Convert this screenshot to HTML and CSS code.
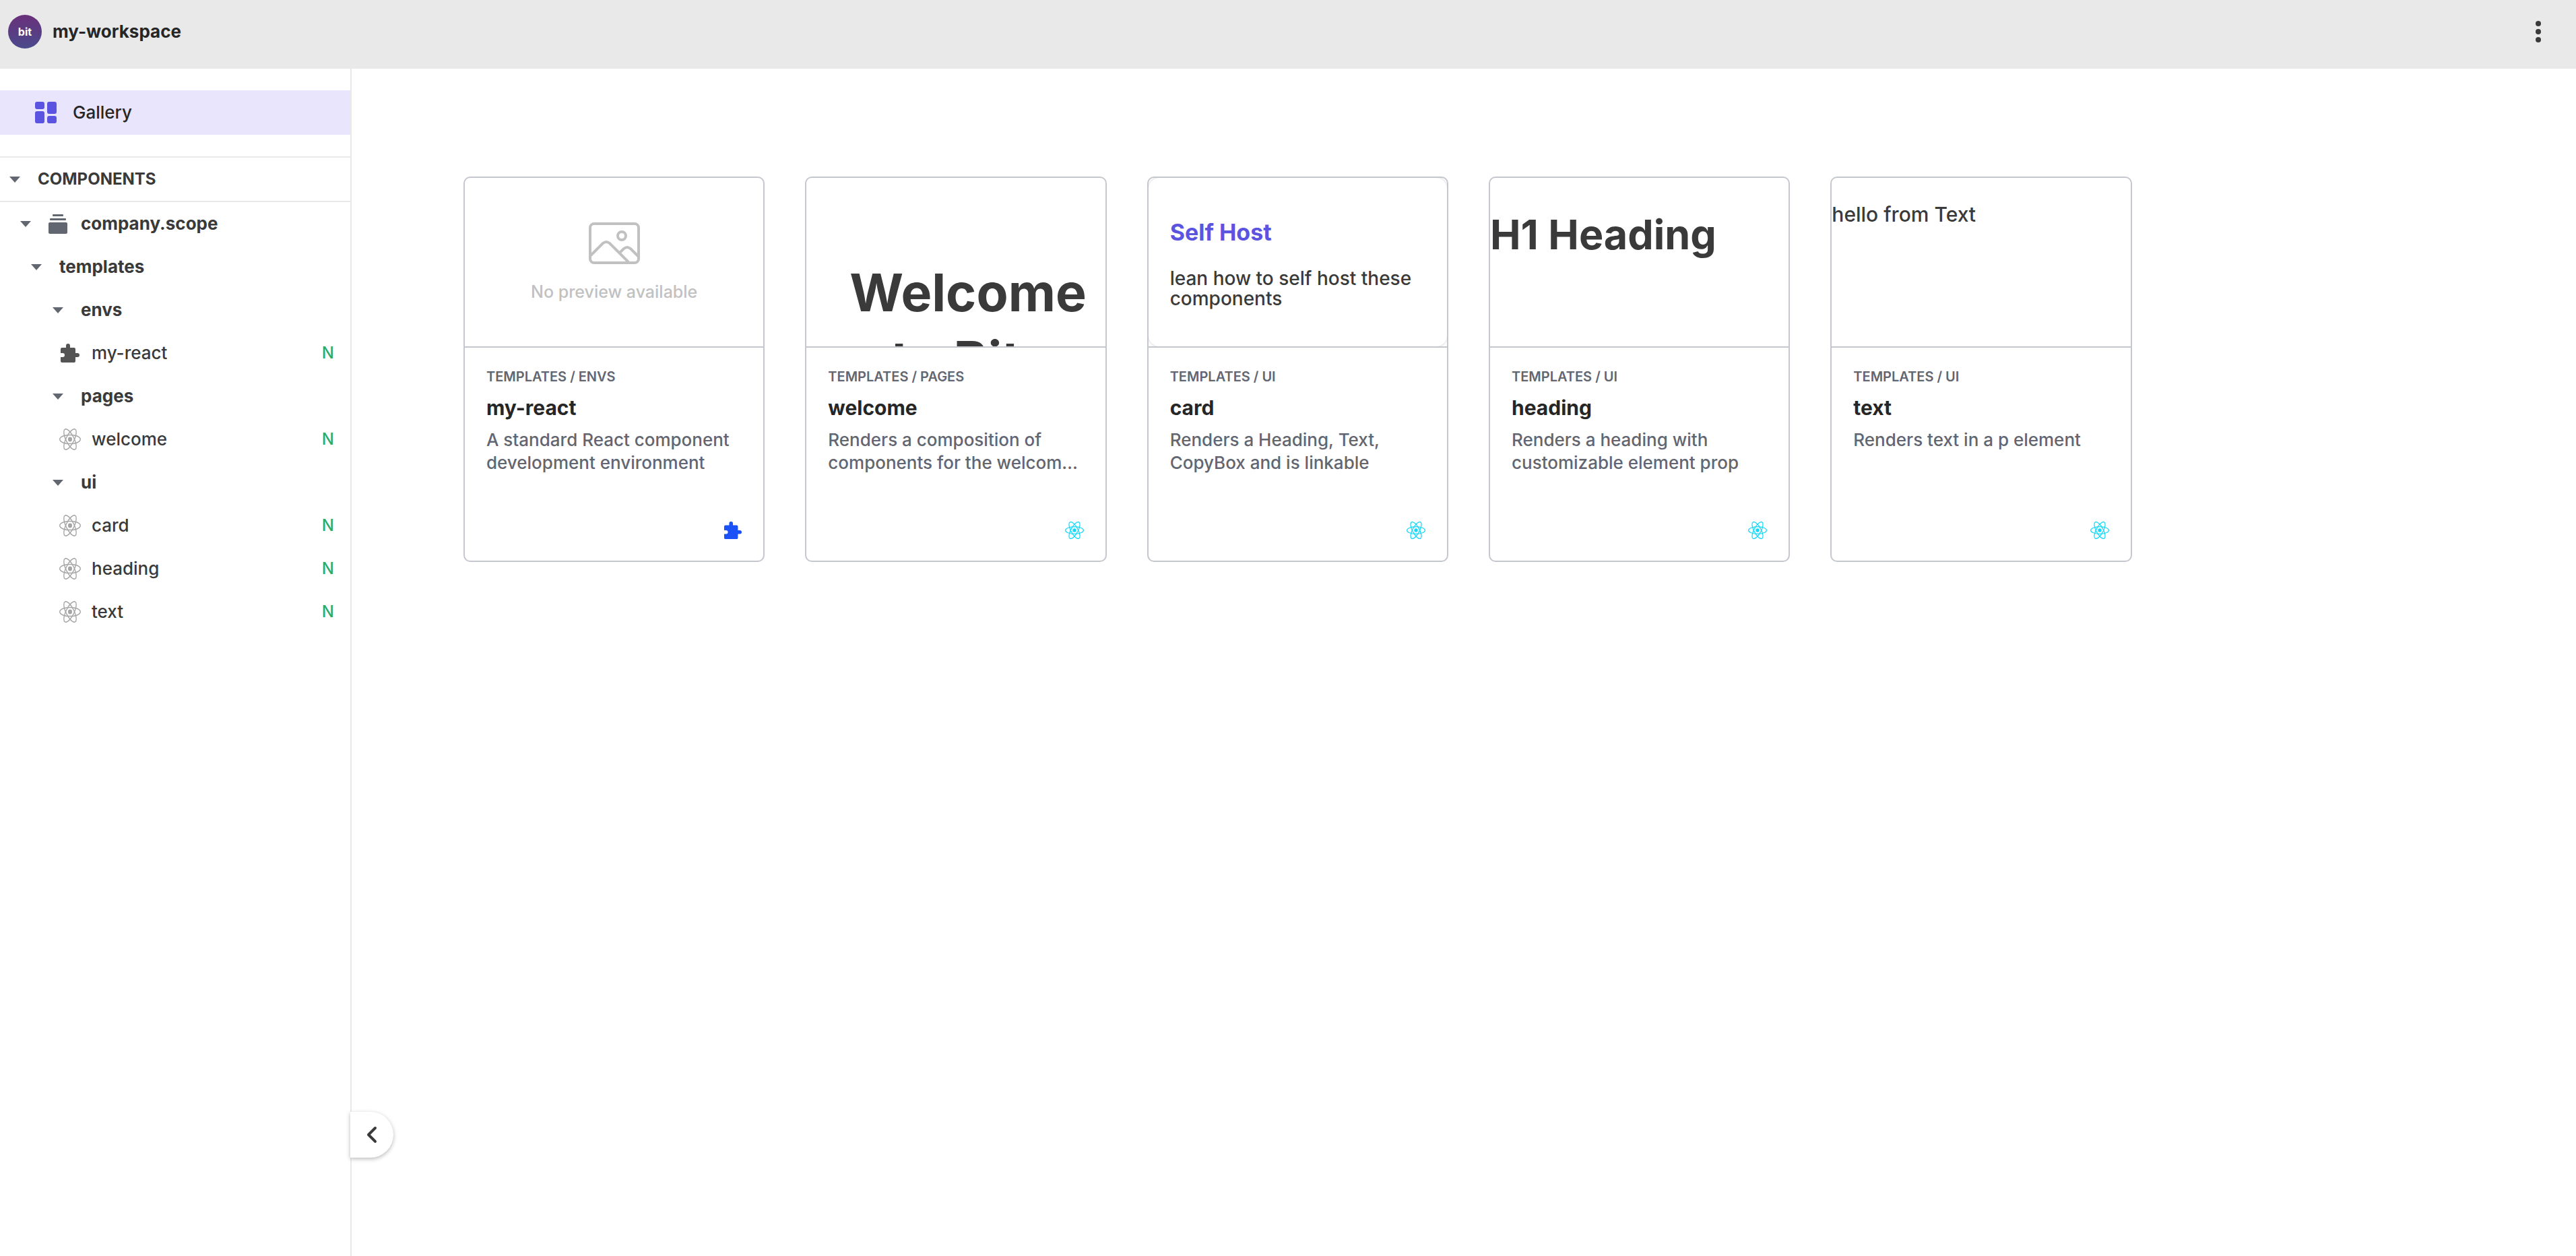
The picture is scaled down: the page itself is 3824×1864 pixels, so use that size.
FILE: index.html
```html
<!DOCTYPE html>
<html lang="en">
<head>
<meta charset="utf-8">
<title>my-workspace</title>
<link rel="stylesheet" href="styles.css">
</head>
<body>
<svg class="sprite" aria-hidden="true">
  <symbol id="react" viewBox="-11.5 -10.23 23 20.46" preserveAspectRatio="none">
    <circle r="2.2" fill="currentColor"/>
    <g fill="none" stroke="currentColor" stroke-width="1">
      <ellipse rx="11" ry="4.2"/>
      <ellipse rx="11" ry="4.2" transform="rotate(60)"/>
      <ellipse rx="11" ry="4.2" transform="rotate(120)"/>
    </g>
  </symbol>
  <symbol id="puzzle" viewBox="0 0 28 28">
    <path fill="currentColor" d="M2 6h6V3a3 3 0 0 1 6 0v3h6a2 2 0 0 1 2 2v6h3a3 3 0 0 1 0 6h-3v6a2 2 0 0 1-2 2H2a2 2 0 0 1-2-2v-6h3a3 3 0 0 0 0-6H0V8a2 2 0 0 1 2-2z"/>
  </symbol>
</svg>

<header class="topbar">
  <a class="brand" href="#">
    <span class="logo">bit</span>
    <span class="brand-name">my-workspace</span>
  </a>
  <button class="kebab" type="button" aria-label="Menu">
    <svg width="8" height="32" viewBox="0 0 8 32" fill="currentColor"><circle cx="4" cy="4" r="4"/><circle cx="4" cy="16" r="4"/><circle cx="4" cy="28" r="4"/></svg>
  </button>
</header>

<div class="layout">
  <nav class="sidebar" aria-label="Workspace">
    <a class="gallery-link" href="#">
      <svg width="32" height="32" viewBox="0 0 32 32" fill="currentColor"><rect width="14" height="11" rx="3"/><rect y="14" width="14" height="18" rx="3"/><rect x="18" width="14" height="18" rx="3"/><rect x="18" y="21" width="14" height="11" rx="3"/></svg>
      Gallery
    </a>
    <button class="section" type="button"><span class="caret"></span>COMPONENTS</button>
    <ul class="tree">
      <li><button class="row depth-1" type="button"><span class="caret"></span>
        <svg class="scope-icon" width="28" height="29" viewBox="0 0 28 29" fill="currentColor"><rect x="6" width="16" height="3" rx="1"/><rect x="2" y="6" width="24" height="3" rx="1"/><rect y="12" width="28" height="17" rx="2"/></svg>company.scope</button></li>
      <li><button class="row depth-2" type="button"><span class="caret"></span>templates</button></li>
      <li><button class="row depth-3" type="button"><span class="caret"></span>envs</button></li>
      <li><a class="row leaf" href="#"><svg class="leaf-icon env"><use href="#puzzle"/></svg>my-react<span class="status">N</span></a></li>
      <li><button class="row depth-3" type="button"><span class="caret"></span>pages</button></li>
      <li><a class="row leaf" href="#"><svg class="leaf-icon"><use href="#react"/></svg>welcome<span class="status">N</span></a></li>
      <li><button class="row depth-3" type="button"><span class="caret"></span>ui</button></li>
      <li><a class="row leaf" href="#"><svg class="leaf-icon"><use href="#react"/></svg>card<span class="status">N</span></a></li>
      <li><a class="row leaf" href="#"><svg class="leaf-icon"><use href="#react"/></svg>heading<span class="status">N</span></a></li>
      <li><a class="row leaf" href="#"><svg class="leaf-icon"><use href="#react"/></svg>text<span class="status">N</span></a></li>
    </ul>
  </nav>

  <main class="content">
    <button class="collapse" type="button" aria-label="Collapse sidebar">
      <svg width="16" height="26" viewBox="0 0 16 26" fill="none" stroke="currentColor" stroke-width="4" stroke-linecap="round" stroke-linejoin="round"><path d="M13 3 3 13l10 10"/></svg>
    </button>
    <div class="cards">
      <a class="card" href="#">
        <div class="preview preview-empty">
          <svg width="76" height="62" viewBox="0 0 76 62" fill="none" stroke="currentColor" stroke-width="4"><rect x="2" y="2" width="72" height="58" rx="6"/><circle cx="49" cy="20" r="6"/><path d="M3 49 21 31q5-4 10 0l28 28M45 46l7-7q5-4 10 0l12 12"/></svg>
          <span>No preview available</span>
        </div>
        <div class="info">
          <span class="path">TEMPLATES / ENVS</span>
          <h2 class="name">my-react</h2>
          <p class="desc">A standard React component development environment</p>
          <svg class="env-icon env"><use href="#puzzle"/></svg>
        </div>
      </a>
      <a class="card" href="#">
        <div class="preview preview-welcome"><h1>Welcome to Bit</h1></div>
        <div class="info">
          <span class="path">TEMPLATES / PAGES</span>
          <h2 class="name">welcome</h2>
          <p class="desc">Renders a composition of components for the welcome page</p>
          <svg class="env-icon"><use href="#react"/></svg>
        </div>
      </a>
      <a class="card" href="#">
        <div class="preview"><div class="demo-card"><h3>Self Host</h3><p>lean how to self host these components</p></div></div>
        <div class="info">
          <span class="path">TEMPLATES / UI</span>
          <h2 class="name">card</h2>
          <p class="desc">Renders a Heading, Text, CopyBox and is linkable</p>
          <svg class="env-icon"><use href="#react"/></svg>
        </div>
      </a>
      <a class="card" href="#">
        <div class="preview preview-heading"><h1>H1 Heading</h1></div>
        <div class="info">
          <span class="path">TEMPLATES / UI</span>
          <h2 class="name">heading</h2>
          <p class="desc">Renders a heading with customizable element prop</p>
          <svg class="env-icon"><use href="#react"/></svg>
        </div>
      </a>
      <a class="card" href="#">
        <div class="preview preview-text"><p>hello from Text</p></div>
        <div class="info">
          <span class="path">TEMPLATES / UI</span>
          <h2 class="name">text</h2>
          <p class="desc">Renders text in a p element</p>
          <svg class="env-icon"><use href="#react"/></svg>
        </div>
      </a>
    </div>
  </main>
</div>
</body>
</html>
```
FILE: styles.css
```css
:root {
  --ink: #3a3a3a;
  --title: #262626;
  --muted: #626671;
  --line: #e9e9e9;
  --card-line: #c4c7cd;
  --brand: #5b54e0;
}

* { box-sizing: border-box; }

body {
  margin: 0;
  min-height: 100vh;
  display: flex;
  flex-direction: column;
  background: #fff;
  color: var(--ink);
  font: 500 26px/34px Inter, sans-serif;
}

h1, h2, h3, p, ul { margin: 0; padding: 0; }
a { color: inherit; text-decoration: none; }
button { border: 0; background: none; padding: 0; font: inherit; color: inherit; text-align: left; }
.sprite { display: none; }

/* Top bar */
.topbar {
  height: 102px;
  padding: 0 52px 8px 12px;
  display: flex;
  align-items: center;
  justify-content: space-between;
  background: var(--line);
}
.brand { display: flex; align-items: center; gap: 16px; }
.logo {
  width: 50px;
  height: 50px;
  border-radius: 50%;
  display: flex;
  align-items: center;
  justify-content: center;
  background: linear-gradient(#69307a, #4a4a8c);
  color: #fff;
  font-size: 16px;
  font-weight: 700;
}
.brand-name { color: var(--title); font-weight: 700; }
.kebab { display: flex; }

/* Sidebar */
.layout { flex: 1; display: flex; }
.sidebar {
  flex: 0 0 522px;
  padding-top: 32px;
  border-right: 2px solid var(--line);
}
.gallery-link {
  height: 66px;
  margin-bottom: 32px;
  padding-left: 52px;
  display: flex;
  align-items: center;
  gap: 24px;
  background: #e8e5fc;
  color: var(--title);
}
.gallery-link svg { color: var(--brand); }
.section {
  width: 100%;
  height: 68px;
  padding-left: 14px;
  display: flex;
  align-items: center;
  gap: 26px;
  border: solid var(--line);
  border-width: 2px 0;
  font-size: 24px;
  font-weight: 700;
}
.caret {
  border: solid transparent;
  border-width: 9px 8px 0;
  border-top-color: var(--muted);
}
.tree { list-style: none; }
.row {
  width: 100%;
  height: 64px;
  padding-right: 24px;
  display: flex;
  align-items: center;
  gap: 26px;
  font-weight: 700;
}
.depth-1 { padding-left: 30px; }
.depth-2 { padding-left: 46px; }
.depth-3 { padding-left: 78px; }
.scope-icon { margin-right: -6px; color: var(--muted); }
.leaf { padding-left: 88px; gap: 16px; font-weight: 500; }
.leaf-icon { width: 32px; height: 32px; color: #a6a6a6; }
.leaf-icon.env { padding: 2px; color: #545454; }
.status { margin-left: auto; color: #2dac68; font-size: 24px; }

/* Gallery */
.content { flex: 1; position: relative; padding: 160px 152px 160px 166px; }
.cards {
  display: grid;
  grid-template-columns: repeat(auto-fill, minmax(400px, 1fr));
  gap: 60px;
}
.card {
  min-height: 572px;
  display: flex;
  flex-direction: column;
  overflow: hidden;
  border: 2px solid var(--card-line);
  border-radius: 10px;
}
.preview {
  height: 252px;
  overflow: hidden;
  border-bottom: 2px solid var(--card-line);
}
.preview-empty {
  padding-top: 2px;
  display: flex;
  flex-direction: column;
  align-items: center;
  justify-content: center;
  gap: 24px;
  color: #c1c1c1;
  font-size: 25px;
}
.preview-welcome { padding: 120px 64px 0; text-align: center; }
.preview-welcome h1 { font-size: 77px; line-height: 100px; }
.preview-heading { padding-top: 44px; }
.preview-heading h1 { font-size: 61px; line-height: 80px; }
.preview-text { padding-top: 38px; font-size: 30px; line-height: 32px; }
.demo-card {
  height: 250px;
  padding: 60px 32px 0;
  border-radius: 16px;
  box-shadow: 0 0 4px rgb(0 0 0 / 20%);
}
.demo-card h3 { margin-bottom: 32px; color: var(--brand); font-size: 34px; line-height: 42px; }
.demo-card p { font-size: 28px; line-height: 30px; }

.info {
  flex: 1;
  padding: 32px;
  display: flex;
  flex-direction: column;
  color: var(--muted);
}
.path { margin-bottom: 16px; font-size: 20px; font-weight: 600; line-height: 22px; }
.name { margin-bottom: 12px; color: var(--title); font-size: 30px; line-height: 38px; }
.desc {
  display: -webkit-box;
  -webkit-box-orient: vertical;
  -webkit-line-clamp: 2;
  overflow: hidden;
}
.env-icon { width: 28px; height: 26px; margin-top: auto; align-self: flex-end; color: #14d8f9; }
.env-icon.env { width: 26px; color: #1a52f8; }

/* Sidebar toggle, sits over the sidebar edge */
.collapse {
  position: absolute;
  left: -2px;
  bottom: 146px;
  width: 64px;
  height: 68px;
  display: flex;
  align-items: center;
  justify-content: center;
  border-radius: 0 34px 34px 0;
  background: #fff;
  box-shadow: 0 2px 6px rgb(0 0 0 / 28%);
}
```
